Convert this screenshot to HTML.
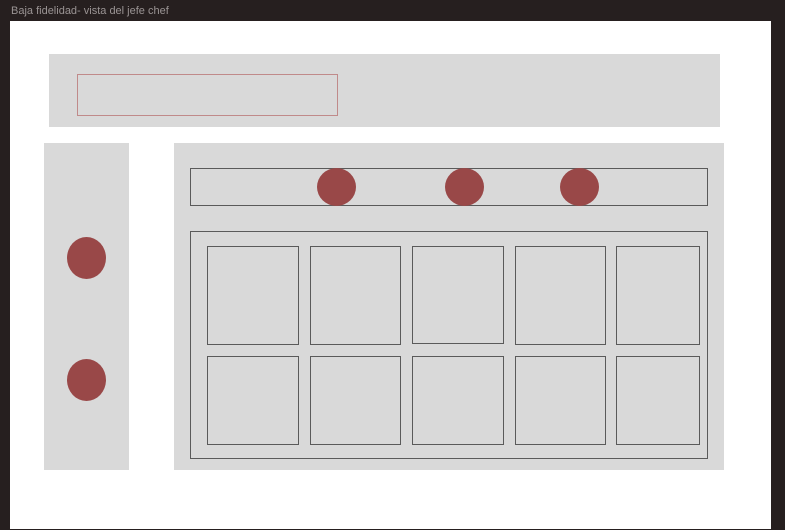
<!DOCTYPE html>
<html><head><style>
body{margin:0;width:785px;height:530px;background:#261f1f;position:relative;overflow:hidden;font-family:"Liberation Sans",sans-serif}
div{position:absolute;box-sizing:border-box}
.g{background:#d9d9d9}
.c{border:1px solid #5a5a5a}
.r{background:#994848;border-radius:50%}
</style></head><body>
<div style="left:11px;top:5px;color:#9a9494;font-size:11px">Baja fidelidad- vista del jefe chef</div>
<div style="left:10px;top:21px;width:761px;height:508px;background:#fff"></div>
<div class="g" style="left:49px;top:54px;width:671px;height:73px"></div>
<div style="left:77px;top:74px;width:261px;height:42px;border:1px solid #c08a8a"></div>
<div class="g" style="left:44px;top:143px;width:85px;height:327px"></div>
<div class="r" style="left:67px;top:237px;width:39px;height:42px"></div>
<div class="r" style="left:67px;top:359px;width:39px;height:42px"></div>
<div class="g" style="left:174px;top:143px;width:550px;height:327px"></div>
<div class="c" style="left:190px;top:168px;width:518px;height:38px"></div>
<div class="r" style="left:317px;top:168px;width:39px;height:38px"></div>
<div class="r" style="left:445px;top:168px;width:39px;height:38px"></div>
<div class="r" style="left:560px;top:168px;width:39px;height:38px"></div>
<div class="c" style="left:190px;top:231px;width:518px;height:228px"></div>
<div class="c" style="left:207px;top:246px;width:92px;height:99px"></div>
<div class="c" style="left:310px;top:246px;width:91px;height:99px"></div>
<div class="c" style="left:412px;top:246px;width:92px;height:98px"></div>
<div class="c" style="left:515px;top:246px;width:91px;height:99px"></div>
<div class="c" style="left:616px;top:246px;width:84px;height:99px"></div>
<div class="c" style="left:207px;top:356px;width:92px;height:89px"></div>
<div class="c" style="left:310px;top:356px;width:91px;height:89px"></div>
<div class="c" style="left:412px;top:356px;width:92px;height:89px"></div>
<div class="c" style="left:515px;top:356px;width:91px;height:89px"></div>
<div class="c" style="left:616px;top:356px;width:84px;height:89px"></div>
</body></html>
